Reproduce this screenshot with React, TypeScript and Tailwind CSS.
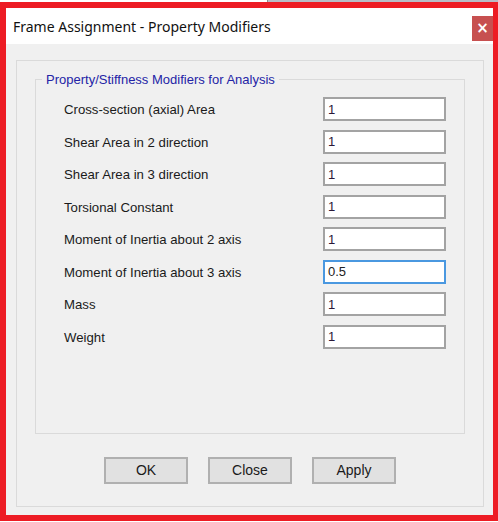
const rows = [
  { label: "Cross-section (axial) Area", value: "1" },
  { label: "Shear Area in 2 direction", value: "1" },
  { label: "Shear Area in 3 direction", value: "1" },
  { label: "Torsional Constant", value: "1" },
  { label: "Moment of Inertia about 2 axis", value: "1" },
  { label: "Moment of Inertia about 3 axis", value: "0.5", focused: true },
  { label: "Mass", value: "1" },
  { label: "Weight", value: "1" },
]

function DialogButton({ children }: { children: React.ReactNode }) {
  return (
    <button className="w-[84px] h-[27px] bg-[#e1e1e1] border-2 border-[#b0b0b0] text-[14px] text-[#1a1a1a] font-['Liberation_Sans',sans-serif]">
      {children}
    </button>
  )
}

export default function App() {
  return (
    <div className="w-[498px] h-[522px] bg-white flex flex-col overflow-hidden">
      <div className="h-[2px] flex shrink-0">
        <div className="w-[267px] bg-white" />
        <div className="w-px bg-[#8a8a8a]" />
        <div className="flex-1 bg-[#b9bdc7]" />
      </div>
      <div className="h-[519px] shrink-0 border-[#ed1c24] border-t-[6px] border-l-[6px] border-r-[5px] border-b-[6px] flex flex-col">
        <div className="h-[36px] bg-white flex items-start shrink-0">
          <div className="flex-1 pl-[7px] pt-[9px] text-[14px] leading-[20px] text-[#111] font-['Noto_Sans',sans-serif]">
            Frame Assignment - Property Modifiers
          </div>
          <div className="mt-[8px] w-[21px] h-[25px] bg-[#c75050] flex items-center justify-center text-white text-[15px] font-bold leading-none font-['DejaVu_Sans',sans-serif]">
            ×
          </div>
        </div>
        <div className="flex-1 bg-[#f0f0f0] pt-[16px] pl-[10px] pr-[9px]">
          <div className="h-[447px] border border-[#dadada] px-[18px] pt-[18px] font-['Liberation_Sans',sans-serif]">
            <div className="relative h-[355px] border border-[#dadada]">
              <span className="absolute -top-[8px] left-[6px] px-[4px] bg-[#f0f0f0] text-[13px] leading-[15px] text-[#2424a6]">
                Property/Stiffness Modifiers for Analysis
              </span>
              <div className="pt-[17px] flex flex-col gap-[8.5px]">
                {rows.map((r) => (
                  <div key={r.label} className="flex items-center h-[24px]">
                    <div className="flex-1 pl-[28px] pt-[2px] text-[13.2px] text-[#1a1a1a]">{r.label}</div>
                    <div
                      className={
                        r.focused
                          ? "w-[123px] h-[24px] mr-[18px] bg-white border-2 border-[#4a98e0] pl-[3px] pt-[1px] flex items-center text-[13px] text-[#222]"
                          : "w-[123px] h-[24px] mr-[18px] bg-white border-2 border-[#a3a3a3] pl-[3px] pt-[1px] flex items-center text-[13px] text-[#2a1838]"
                      }
                    >
                      {r.value}
                    </div>
                  </div>
                ))}
              </div>
            </div>
            <div className="flex justify-center gap-[20px] mt-[23px]">
              <DialogButton>OK</DialogButton>
              <DialogButton>Close</DialogButton>
              <DialogButton>Apply</DialogButton>
            </div>
          </div>
        </div>
      </div>
      <div className="flex-1 bg-white" />
    </div>
  )
}
